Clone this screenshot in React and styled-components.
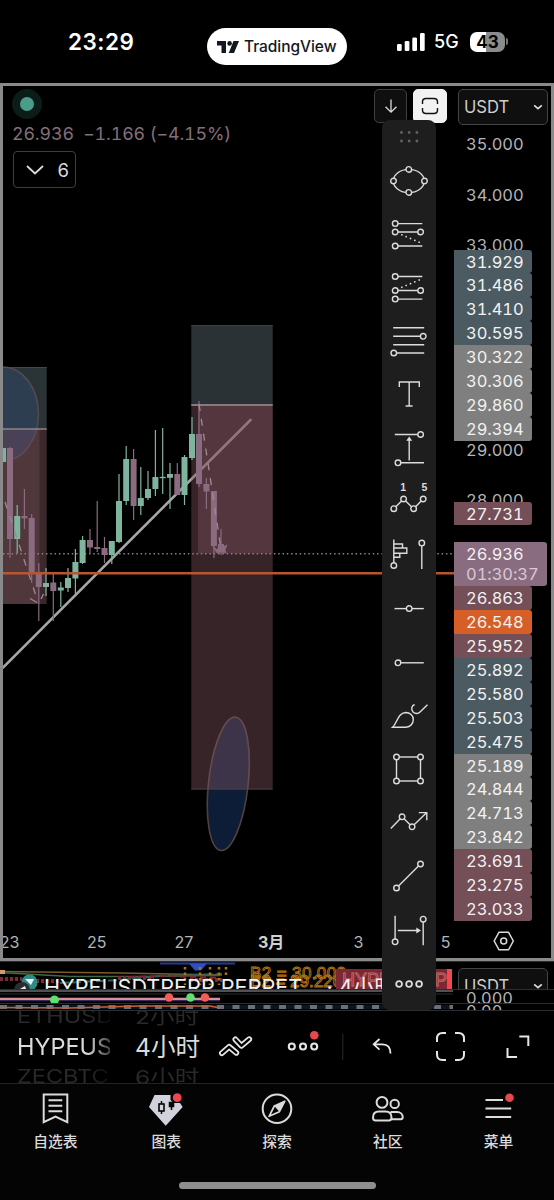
import React from "react";
import styled, { createGlobalStyle } from "styled-components";

const GlobalStyle = createGlobalStyle`
  * {
    box-sizing: border-box;
  }
  body {
    margin: 0;
    background: #000;
    color: #dbdbdb;
    font-family: Inter, "Noto Sans CJK SC", sans-serif;
  }
  svg {
    display: block;
    flex: none;
  }
`;

const Screen = styled.div`
  width: 554px;
  height: 1200px;
  display: flex;
  flex-direction: column;
  background: #000;
  overflow: hidden;
`;

/* status bar */

const StyledStatusBar = styled.header`
  height: 83px;
  flex: none;
  display: grid;
  grid-template-columns: 207px 140px 207px;
  align-items: start;

  .time {
    padding: 28px 0 0 68px;
    font-size: 22.5px;
    font-weight: 600;
    line-height: 27px;
    letter-spacing: 0.5px;
    color: #fff;
  }
  .pill {
    margin-top: 28px;
    height: 37px;
    border-radius: 19px;
    background: #fff;
    color: #131722;
    display: flex;
    align-items: center;
    gap: 5px;
    padding-left: 10px;
    font-size: 15.5px;
    font-weight: 500;
    letter-spacing: -0.05px;
  }
  .signal {
    padding: 31px 0 0 50px;
    display: flex;
    align-items: center;
    color: #fff;
    font-size: 18px;
    font-weight: 500;
    line-height: 20px;
  }
  .signal span {
    margin: 1px 10px 0 9px;
    width: 26px;
    white-space: nowrap;
  }
`;

const Battery = styled.div`
  width: 35px;
  height: 20px;
  border-radius: 7px;
  background: linear-gradient(90deg, #fff 45%, #8b8b8b 45%);
  color: #000;
  font-size: 17px;
  font-weight: 700;
  line-height: 20px;
  text-align: center;
`;

const BatteryTip = styled.div`
  width: 2px;
  height: 7px;
  margin-left: 1px;
  border-radius: 0 3px 3px 0;
  background: #777;
`;

/* chart panel */

const ChartPanel = styled.section`
  position: relative;
  height: 878px;
  flex: none;
  border: 3px solid #8a8a8a;
  display: grid;
  grid-template-columns: 451px 1fr;
  grid-template-rows: 1fr 35px;
`;

const Plot = styled.div`
  display: grid;
  min-width: 0;
  overflow: hidden;

  > * {
    grid-area: 1 / 1;
  }
`;

const Legend = styled.div`
  padding: 3px 0 0 9px;

  .head {
    height: 34px;
    display: flex;
    gap: 6px;
    padding-right: 7px;
  }
  .dot {
    width: 30px;
    height: 30px;
    border-radius: 50%;
    border: 8px solid #0c1d19;
    background: #4a9d89;
    margin-right: auto;
  }
  .quote {
    margin: 0;
    height: 28px;
    line-height: 21px;
    font-size: 17.8px;
    font-variant-numeric: tabular-nums;
    color: #836f7b;
    white-space: pre;
    letter-spacing: -0.1px;
  }
`;

const SquareButton = styled.button`
  width: ${(props) => (props.$active ? "34px" : "33px")};
  height: 34px;
  padding: 0;
  display: flex;
  align-items: center;
  justify-content: center;
  border-radius: 5px;
  border: 1px solid ${(props) => (props.$active ? "#f2f2f2" : "#404040")};
  background: ${(props) => (props.$active ? "#f2f2f2" : "#0f0f0f")};
`;

const CountButton = styled.button`
  width: 63px;
  height: 37px;
  margin-left: 1px;
  padding: 0 6px 0 12px;
  display: flex;
  align-items: center;
  justify-content: space-between;
  border: 1px solid #3d3d3d;
  border-radius: 4px;
  background: #000;
  color: #dbdbdb;
  font: 400 18.5px Inter, sans-serif;
`;

const PriceAxis = styled.div`
  padding: 3px 3px 0 0;
  overflow: hidden;
  font-size: 16.5px;
  font-variant-numeric: tabular-nums;
  letter-spacing: -0.05px;
`;

const CurrencySelect = styled.div`
  width: 90px;
  height: 36px;
  margin: 0 0 10px 4px;
  padding: 0 4px 0 5px;
  display: flex;
  align-items: center;
  justify-content: space-between;
  border: 1px solid #454545;
  border-radius: 5px;
  background: #0f0f0f;
  color: #cfcfcf;
  font-size: 16.6px;
  letter-spacing: 0;
`;

const Tick = styled.div`
  height: ${(props) => props.$height}px;
  padding-left: 12px;
  line-height: 18px;
  color: #b4b4b4;
  overflow: hidden;
`;

const PriceTag = styled.div`
  width: 77.5px;
  height: 23.95px;
  padding-left: 12px;
  line-height: 24px;
  color: #f2f2f2;
  border-radius: 0 3px 3px 0;
  background: ${(props) => props.$color};
  margin-bottom: ${(props) => props.$gap || 0}px;
`;

const CurrentPrice = styled.div`
  width: 93px;
  height: 44px;
  padding: 2px 0 0 12px;
  line-height: 20px;
  color: #f5f0f4;
  border-radius: 0 3px 3px 0;
  background: #8a6c80;

  span {
    display: block;
    color: #d9c8d3;
  }
`;

const TimeAxis = styled.div`
  display: flex;
  overflow: hidden;

  span {
    flex: none;
    width: 87.2px;
    text-align: center;
    font-size: 16px;
    line-height: 38px;
    color: #b4b4b4;
  }
  span:first-child {
    margin-left: -37px;
  }
  .month {
    font-weight: 700;
    color: #d0d0d0;
  }
`;

const AxisSettings = styled.div`
  padding: 8px 0 0 39px;
`;

const DrawingBar = styled.div`
  position: absolute;
  z-index: 2;
  left: 379px;
  top: 34px;
  width: 53.6px;
  height: 890px;
  border-radius: 8px;
  background: #1e1e1e;
  display: flex;
  flex-direction: column;
`;

const ToolIcon = styled.svg`
  width: 53.6px;
  height: 53.53px;
  fill: none;
  stroke: #dcdcdc;
  stroke-width: 1.4;

  circle {
    fill: #1e1e1e;
  }
  text {
    fill: #dcdcdc;
    stroke: none;
    font: 700 10.5px "Liberation Sans", sans-serif;
  }
  .solid {
    fill: #dcdcdc;
    stroke: none;
  }
`;

/* squeezed lower panes */

const LowerPanes = styled.section`
  height: 50px;
  flex: none;
  display: flex;
  flex-direction: column;
  background: #000;
`;

const Pane = styled.div`
  height: ${(props) => props.$height}px;
  border-top: 1px solid #2b2d31;
  display: grid;
  grid-template-columns: 453px 1fr;
  overflow: hidden;

  > svg {
    grid-area: 1 / 1;
  }
`;

const PaneTitle = styled.div`
  grid-area: 1 / 1;
  height: 27px;
  padding: 14px 0 0 44px;
  font-size: 21.6px;
  line-height: 22px;
  white-space: pre;
  color: #f0f0f0;
  overflow: hidden;
`;

const PaneScale = styled.div`
  grid-area: 1 / 2;
  padding-left: 13px;
  font-size: 16.4px;
  font-variant-numeric: tabular-nums;
  line-height: ${(props) => props.$line}px;
  color: #b4b4b4;
  overflow: hidden;
`;

const PaneSelect = styled.div`
  grid-area: 1 / 2;
  padding-top: 6px;
  padding-left: 1px;
  overflow: hidden;
`;

/* bottom toolbar */

const BottomToolbar = styled.div`
  height: 73px;
  flex: none;
  border-bottom: 1px solid #242424;
  display: flex;
  align-items: center;
`;

const Picker = styled.div`
  width: ${(props) => props.$width}px;
  height: 72px;
  margin-left: ${(props) => props.$left}px;
  display: flex;
  flex-direction: column;
  justify-content: center;
  font-size: ${(props) => props.$size}px;
  line-height: 30px;
  white-space: nowrap;
  overflow: hidden;
  color: #dbdbdb;
  mask-image: ${(props) =>
    props.$fade ? "linear-gradient(90deg, #000 76%, transparent 110%)" : "none"};

  > * {
    flex: none;
    height: 30px;
  }
`;

const GhostOption = styled.div`
  color: #292929;
  transform: scaleY(0.78);
`;

const ToolbarIcons = styled.div`
  display: flex;
  align-items: center;
  fill: none;
  stroke: #e6e6e6;
  stroke-width: 2;
`;

const TabBar = styled.nav`
  height: 117px;
  flex: none;
  background: #040404;
  display: flex;
  flex-direction: column;
  align-items: center;

  .tabs {
    display: flex;
    width: 100%;
    height: 98px;
  }
`;

const Tab = styled.div`
  flex: 1;
  display: flex;
  flex-direction: column;
  align-items: center;
  padding-top: 5px;
  font-size: 14.8px;
  font-weight: 500;
  line-height: 22px;
  color: #dbdbdb;
  gap: 3px;

  svg {
    fill: none;
    stroke: #dbdbdb;
    stroke-width: 2;
  }
`;

const HomeIndicator = styled.div`
  width: 197px;
  height: 7px;
  border-radius: 4px;
  background: #8e8e8e;
`;

const BLUE = "#4c5a62";
const GREY = "#7f7f7f";
const WINE = "#744f57";
const ORANGE = "#d65f28";

const upperTags = [
  ["31.929", BLUE],
  ["31.486", BLUE],
  ["31.410", BLUE],
  ["30.595", BLUE],
  ["30.322", GREY],
  ["30.306", GREY],
  ["29.860", GREY],
  ["29.394", GREY],
];

const lowerTags = [
  ["26.863", WINE],
  ["26.548", ORANGE],
  ["25.952", WINE],
  ["25.892", BLUE],
  ["25.580", BLUE],
  ["25.503", BLUE],
  ["25.475", BLUE],
  ["25.189", GREY],
  ["24.844", GREY],
  ["24.713", GREY],
  ["23.842", GREY],
  ["23.691", WINE],
  ["23.275", WINE],
  ["23.033", WINE],
];

// x, high, low, body top, body bottom, rising
const candles = [
  [3, 448, 462, 448, 462, 1],
  [10, 447, 558, 448, 539, 0],
  [17.2, 505, 553, 516, 539, 1],
  [24.4, 489, 529, 516, 518.3, 0],
  [31.7, 514, 583, 518, 572, 0],
  [38.8, 563, 621, 572, 587, 0],
  [46, 568, 596, 583, 587, 1],
  [53.3, 574, 621, 582.5, 591, 0],
  [60.8, 582, 607, 587.5, 590.5, 1],
  [68, 568, 592, 578, 588, 1],
  [75.4, 549, 594, 562, 578.5, 1],
  [82.6, 536, 564, 540, 563, 1],
  [90, 529, 553, 540, 547.5, 0],
  [97.2, 501, 552, 547, 549, 0],
  [104.5, 537, 563, 548, 555, 0],
  [111.8, 541, 564, 541, 555, 1],
  [119, 474, 543, 501, 542, 1],
  [126.2, 446, 505, 459, 501, 1],
  [133.6, 449, 520, 459, 506, 0],
  [140.8, 467, 515, 498, 506, 1],
  [148, 471, 500, 489, 498, 1],
  [155.4, 430, 496, 477, 489, 1],
  [162.7, 428, 494, 476.8, 478.2, 1],
  [170, 463, 509, 474, 477.8, 1],
  [177.3, 463, 495, 474, 495, 0],
  [184.5, 455, 505, 457, 495, 1],
  [192, 417, 460, 434, 458, 1],
  [199, 401, 487, 434, 484, 0],
  [206.4, 478, 509, 484, 491.5, 0],
  [213.9, 491, 558, 491, 546, 0],
  [221, 529, 555, 544, 552, 0],
];

function Candle(props) {
  const [x, high, low, top, bottom, up] = props.data;
  return (
    <g fill={up ? "#7fb59f" : "#8a6b80"}>
      <rect x={x - 0.6} y={high} width="1.2" height={low - high} />
      <rect x={x - 3} y={top} width="6" height={bottom - top} />
    </g>
  );
}

function PriceChart() {
  return (
    <svg width="451" height="837" viewBox="3 86 451 837" fill="none">
      <path d="M3 667.5L250.5 420" stroke="#a6a6a6" strokeWidth="2.6" strokeLinecap="round" />
      <ellipse
        cx="228.3"
        cy="783.8"
        rx="19.8"
        ry="67"
        transform="rotate(6.3 228.3 783.8)"
        fill="#0d1c37"
        stroke="#52403f"
        strokeWidth="1.6"
      />

      <rect x="191.3" y="325" width="81.4" height="80" fill="#2b3236" />
      <path d="M191.3 325.5h81.4" stroke="#3b4347" />
      <rect x="191.3" y="405" width="81.4" height="384.5" fill="#875a64" fillOpacity="0.4" />
      <rect x="198" y="405" width="74.7" height="148.5" fill="#875a64" fillOpacity="0.37" />
      <path d="M191.3 789h81.4" stroke="#4f3c42" />
      <path d="M191.3 405h81.4" stroke="#87797d" strokeWidth="1.8" />

      <rect x="3" y="367" width="43.7" height="62" fill="#2a3336" />
      <path d="M3 367.5h43.7" stroke="#3f484b" />
      <rect x="3" y="429" width="43.7" height="175" fill="#3a282d" />
      <rect x="3" y="429" width="36.5" height="175" fill="#50373c" />
      <ellipse
        cx="3"
        cy="414"
        rx="35.5"
        ry="47"
        fill="#3560a0"
        fillOpacity="0.25"
        stroke="#6a4f58"
        strokeOpacity="0.7"
        strokeWidth="1.6"
      />
      <path d="M3 429h43.7" stroke="#8f8588" strokeWidth="1.6" />

      <path d="M3 553.7h451" stroke="#8d8187" strokeWidth="1.4" strokeDasharray="1.5 2.8" />
      {candles.map((candle, i) => {
        return <Candle key={i} data={candle} />;
      })}
      <path d="M5 502L38 602" stroke="#9b868e" strokeWidth="1.4" strokeDasharray="7 8" />
      <path d="M30 598.5l7 4M41 599l2.5-5" stroke="#9b868e" strokeWidth="1.4" />
      <path d="M199 404L221 549" stroke="#a18c94" strokeWidth="1.3" strokeDasharray="7 8" />
      <path
        d="M213 546l4 4 3-6 3 3 4-2-2 5 1 3-5-1-4 1-2-3z"
        fill="#8a6b80"
        stroke="#8a6b80"
        strokeWidth="0.8"
      />
      <path d="M3 573.3h451" stroke="#b85630" strokeWidth="2.6" />
    </svg>
  );
}

const dots = { strokeDasharray: "0.1 4.6", strokeLinecap: "round", strokeWidth: 1.7 };

// every tool is drawn around its own centre
const tools = [
  <>
    <ellipse rx="15.5" ry="11.6" />
    <circle cx="-15.3" r="2.8" />
    <circle cx="15.7" r="2.8" />
    <circle cy="-11.6" r="2.8" />
    <circle cy="11.4" r="2.8" />
  </>,
  <>
    <path d="M-14-11.4h27.5M-14-3h25M-14 11h27.5" />
    <path d="M-7-.2L13 8.3" {...dots} />
    <circle cx="-13.6" cy="-11.4" r="2.8" />
    <circle cx="-13.6" cy="-3" r="2.8" />
    <circle cx="11.8" cy="-3" r="2.8" />
    <circle cx="-13.6" cy="11" r="2.8" />
  </>,
  <>
    <path d="M-14-11.5h27.5M-14 2.5h25M-14 11.1h27.5" />
    <path d="M-7-.7L12-8.7" {...dots} />
    <circle cx="-13.6" cy="-11.5" r="2.8" />
    <circle cx="-13.6" cy="2.5" r="2.8" />
    <circle cx="11.8" cy="2.5" r="2.8" />
    <circle cx="-13.6" cy="11.1" r="2.8" />
  </>,
  <>
    <path d="M-15.6-14.3h31M-15.6-5.7h28M-15.6 2.7h31M-12 11h27.4" />
    <circle cx="14.4" cy="-5.7" r="2.8" />
    <circle cx="-15" cy="11" r="2.8" />
  </>,
  <path d="M-9.5-8v-5H10.5v5M.4-13v24M-3.2 11H3.8" />,
  <>
    <path d="M-14-14.5h25M-11 13.8h26.2M.4 11.5V-9" />
    <path className="solid" d="M-2.6-8.2L.4-12.6l3 4.4z" />
    <circle cx="11.8" cy="-14.5" r="2.8" />
    <circle cx="-10.8" cy="13.8" r="2.8" />
  </>,
  <>
    <path d="M-15 6.7l9.8-9.7 10 9.7L14.4-3" />
    <circle cx="-15" cy="6.7" r="2.8" />
    <circle cx="-5.2" cy="-3" r="2.8" />
    <circle cx="4.8" cy="6.7" r="2.8" />
    <circle cx="14.4" cy="-3" r="2.8" />
    <text x="-8.6" y="-10.8">1</text>
    <text x="12.6" y="-10.8">5</text>
  </>,
  <>
    <path d="M-15-16.5V9M-15-12h8.7v4h4.3v5.3H-15M-6.3-8H-15M-9-2.7V1.2h-6M13 13V-10" />
    <circle cx="-15" cy="9.5" r="2.8" />
    <circle cx="13" cy="-12.9" r="2.8" />
  </>,
  <>
    <path d="M-14.3-.4h29.3" />
    <circle cx=".4" cy="-.4" r="2.8" />
  </>,
  <>
    <path d="M-10-.2h25" />
    <circle cx="-10.8" cy="-.2" r="2.8" />
  </>,
  <path d="M-16.2 11.2c4.4-3.6 5-14.2 13-14.7 4.5 0 7.7 3.2 7.7 7.2 0 4.5-3.5 7.5-8 7.5zM5.8-11.5c-3.4 1.4-3.4 4.7-1.8 7.2 2.5 2.5 5.5 2.2 7.2.4l7.5-7.4" />,
  <>
    <rect x="-12.3" y="-13" width="24" height="24" />
    <circle cx="-12.3" cy="-13" r="2.8" />
    <circle cx="11.7" cy="-13" r="2.8" />
    <circle cx="-12.3" cy="11" r="2.8" />
    <circle cx="11.7" cy="11" r="2.8" />
  </>,
  <>
    <path d="M-18 5.5L-6.7-6.2 3.3 3.8 17.7-10.2M10-10.4h8v7.6" />
    <circle cx="-6.7" cy="-6.2" r="2.8" />
    <circle cx="3.3" cy="3.8" r="2.8" />
  </>,
  <>
    <path d="M-12.3 11l24-24" />
    <circle cx="-12.3" cy="11" r="2.8" />
    <circle cx="11.7" cy="-13" r="2.8" />
  </>,
  <>
    <path d="M-13.7-15.2v24M14.4-10v24.2M-11-.5h20" />
    <path className="solid" d="M7.5-3.5L12.2-.5l-4.7 3z" />
    <circle cx="-13.7" cy="10.8" r="2.8" />
    <circle cx="14.4" cy="-11.8" r="2.8" />
  </>,
  <g strokeWidth="1.8">
    <circle cx="-9.7" r="2.9" />
    <circle cx=".3" r="2.9" />
    <circle cx="10.3" r="2.9" />
  </g>,
];

function DrawingTools() {
  return (
    <DrawingBar>
      <svg width="53.6" height="34.3" viewBox="0 0 53.6 34.3" fill="#616161">
        {[19.5, 27.2, 34.9].map((x) => {
          return (
            <React.Fragment key={x}>
              <circle cx={x} cy="12.5" r="1.4" />
              <circle cx={x} cy="21" r="1.4" />
            </React.Fragment>
          );
        })}
      </svg>
      {tools.map((tool, i) => {
        return (
          <ToolIcon key={i} viewBox="-26.8 -27 53.6 53.53">
            {tool}
          </ToolIcon>
        );
      })}
    </DrawingBar>
  );
}

function StatusBar() {
  return (
    <StyledStatusBar>
      <div className="time">23:29</div>
      <div className="pill">
        <svg width="22" height="12" viewBox="0 0 22 12" fill="#131722">
          <path d="M0 0h9v12H4.5V4.5H0zM16.5 0H22l-5 12h-5.2z" />
          <circle cx="12.6" cy="2.4" r="2.3" />
        </svg>
        TradingView
      </div>
      <div className="signal">
        <svg width="28" height="18" viewBox="0 0 28 18" fill="#fff">
          <rect x="0" y="11" width="4.7" height="7" rx="1.3" />
          <rect x="7.7" y="8" width="4.7" height="10" rx="1.3" />
          <rect x="15.3" y="4.5" width="4.7" height="13.5" rx="1.3" />
          <rect x="23" y="0" width="4.7" height="18" rx="1.3" />
        </svg>
        <span>5G</span>
        <Battery>43</Battery>
        <BatteryTip />
      </div>
    </StyledStatusBar>
  );
}

function SelectChevron() {
  return (
    <svg width="10" height="8" viewBox="0 0 10 8" fill="none" stroke="#dbdbdb" strokeWidth="1.7">
      <path d="M1.2 2.3L5 5.6l3.8-3.3" />
    </svg>
  );
}

function LowerArea() {
  return (
    <LowerPanes>
      <Pane $height={28}>
        <svg width="453" height="27" viewBox="0 962 453 27" fill="none">
          <path d="M0 971.5L120 973l102 2" stroke="#7c5a2c" strokeWidth="1.6" />
          <path d="M0 972.5l70 4h70l80-1" stroke="#3c6a48" strokeWidth="1.6" />
          <path
            d="M0 979h22M36 981h24M118 978h36M190 980h32"
            stroke="#7d2836"
            strokeWidth="4"
            strokeDasharray="3 2"
          />
          <path d="M60 983l60-3 40-4 62-2" stroke="#2c5f5a" strokeWidth="2" strokeDasharray="9 3" />
          <path d="M130 977l40-1 50 2" stroke="#7d2836" strokeWidth="2" strokeDasharray="6 4" />
          <rect x="0" y="970" width="5" height="4" fill="#cf9c6c" />
          <path d="M160 963.5h75" stroke="#25398f" strokeWidth="2" />
          <path d="M189 963.5h18l-6 7h-6z" fill="#2f4fc0" />
          <path
            d="M185 967v18M200 967v18M210 967v18M219 967v18M226 967v9"
            stroke="#b07418"
            strokeWidth="2.5"
            strokeDasharray="2.5 3"
          />
          <g stroke="#b87716" strokeWidth="0.9" fontFamily="Liberation Sans" fontSize="17">
            <text x="250" y="979" textLength="96">
              B2 = 30.000
            </text>
            <text x="250" y="987" textLength="92">
              B2 = 29.226
            </text>
          </g>
          <rect x="336" y="969" width="111" height="20" fill="#7b2833" />
          <rect x="447" y="969" width="5" height="20" fill="#f0484f" />
          <g stroke="#c46a72" strokeWidth="0.9" fontFamily="Liberation Sans" fontSize="18">
            <text x="342" y="986">HYPE</text>
            <text x="435" y="986">P</text>
          </g>
          <circle cx="29.5" cy="982.5" r="8" fill="#2f8b86" />
          <path d="M25 979h9l-3 6z" fill="#e9f4f4" />
          <circle cx="22" cy="990" r="8" fill="#2a2e33" />
          <path d="M20 989l5-3 1 3z" fill="#eee" />
        </svg>
        <PaneTitle>HYPEUSDTPERP PERPET    · 4小时</PaneTitle>
        <PaneSelect>
          <CurrencySelect>
            USDT
            <SelectChevron />
          </CurrencySelect>
        </PaneSelect>
      </Pane>
      <Pane $height={14}>
        <svg width="453" height="13" viewBox="0 990 453 13" fill="none">
          <path d="M0 991h453" stroke="#6c6c70" strokeWidth="1.5" />
          <path d="M0 994h453" stroke="#2b2d31" />
          <path d="M0 1000.5h220" stroke="#3a2a5c" strokeWidth="1.5" />
          <path d="M0 998.8h220" stroke="#d8909a" strokeWidth="2.2" />
          <circle cx="54.5" cy="1000" r="4.5" fill="#5fe072" />
          <circle cx="169" cy="997.5" r="4.3" fill="#f35c57" />
          <circle cx="190.5" cy="997.5" r="4.3" fill="#5fe072" />
          <circle cx="205" cy="997.5" r="4.3" fill="#f35c57" />
        </svg>
        <PaneScale $line={17}>0.000</PaneScale>
      </Pane>
      <Pane $height={7}>
        <svg width="453" height="6" viewBox="0 1004 453 6" fill="none">
          <path d="M0 1007h453" stroke="#0c1522" strokeWidth="4" />
          <path d="M0 1007h453" stroke="#6b7078" strokeWidth="4" strokeDasharray="7 8.5" />
          <path d="M0 1007.5l70 .5 70-2h70l10 2" stroke="#c2623a" strokeWidth="1.5" />
        </svg>
        <PaneScale $line={14}>0.00</PaneScale>
      </Pane>
      <Pane $height={1} />
    </LowerPanes>
  );
}

// a wide line with a dark core gives the hollow double chevron
const chevrons = "M221.9 1053.2l7.2-6.4 7.2 6M235.4 1039.4l6 6.4 7.800-6.600";

function Toolbar() {
  return (
    <BottomToolbar>
      <Picker $left={17} $width={93} $size={23.5} $fade>
        <GhostOption>ETHUSD</GhostOption>
        <div>HYPEUS</div>
        <GhostOption>ZECBTC</GhostOption>
      </Picker>
      <Picker $left={25} $width={71} $size={24.6}>
        <GhostOption>2小时</GhostOption>
        <div>4小时</div>
        <GhostOption>6小时</GhostOption>
      </Picker>
      <ToolbarIcons>
        <svg width="348" height="72" viewBox="206 1011 348 72">
          <g strokeLinecap="round" strokeLinejoin="round">
            <path d={chevrons} strokeWidth="5.8" />
            <path d={chevrons} stroke="#000" strokeWidth="2.3" />
          </g>
          <g strokeWidth="2.1">
            <circle cx="291.8" cy="1046.5" r="3" />
            <circle cx="303" cy="1046.5" r="3" />
            <circle cx="314.2" cy="1046.5" r="3" />
          </g>
          <circle cx="314.3" cy="1035.2" r="4.3" fill="#e5484f" stroke="none" />
          <path d="M342.8 1034v26" stroke="#2a2a2a" strokeWidth="1" />
          <path strokeWidth="1.8" d="M379.5 1039l-5.8 5.3 5.8 5.3M374 1044.3h8.5c5 0 8 3 8 9.2" />
          <path d="M437 1042v-3.5c0-3.5 2-5.5 5.5-5.5h3.5M455 1033h3.5c3.5 0 5.5 2 5.5 5.5v3.5M464 1051v3.5c0 3.5-2 5.5-5.5 5.5H455M446 1060h-3.5c-3.5 0-5.5-2-5.5-5.5V1051" />
          <path d="M519.3 1036.5h9v9.500M507.500 1048v9h9.500" />
        </svg>
      </ToolbarIcons>
    </BottomToolbar>
  );
}

function Navigation() {
  return (
    <TabBar>
      <div className="tabs">
        <Tab>
          <svg width="40" height="39" viewBox="35.5 1089 40 39">
            <path d="M44.2 1094.5h23.6v27.7l-11.8-5.7-11.8 5.7zM49 1100.3h13.8M49 1105.8h13.8M49 1111.3h13.8" />
          </svg>
          自选表
        </Tab>
        <Tab>
          <svg width="40" height="39" viewBox="146 1089 40 39">
            <path
              stroke="none"
              fill="#d1d3dc"
              d="M154.5 1095h16v5l3 3h6.5l2.7 4-17 18.8-16.7-18.8z"
            />
            <path d="M161.5 1101v13" stroke="#040404" strokeWidth="1.5" />
            <rect
              x="159"
              y="1104"
              width="5"
              height="7"
              fill="#d1d3dc"
              stroke="#040404"
              strokeWidth="1.6"
            />
            <path
              d="M169.5 1102.500h4v4h-4zM171.500 1106v4"
              stroke="#040404"
              strokeWidth="1.5"
              fill="#040404"
            />
            <circle cx="177.2" cy="1097.7" r="4.4" fill="#ee4750" stroke="none" />
          </svg>
          图表
        </Tab>
        <Tab>
          <svg width="40" height="39" viewBox="256.5 1089 40 39">
            <circle cx="276.5" cy="1108.7" r="14.3" />
            <path
              strokeWidth="1.7"
              strokeLinejoin="round"
              d="M284.3 1101.2l-10.5 4.8-5.2 10.3 10.3-4.6z"
            />
            <path fill="#dbdbdb" stroke="none" d="M284.3 1101.2l-10.5 4.8 5.1 5.7z" />
          </svg>
          探索
        </Tab>
        <Tab>
          <svg width="40" height="39" viewBox="368 1089 40 39">
            <circle cx="382" cy="1102.4" r="5.4" />
            <circle cx="394.7" cy="1103.9" r="4.2" />
            <path d="M373 1117.5c0-4 2.5-6 6-6h6.5c3.5 0 6 2 6 6 0 2-.5 3-2.5 3h-13.5c-2 0-2.5-1-2.5-3zM390.5 1112h6.5c3.3 0 5.7 2 5.7 5.2 0 1.3-.6 2-2 2H391.5" />
          </svg>
          社区
        </Tab>
        <Tab>
          <svg width="40" height="39" viewBox="478.5 1089 40 39">
            <path d="M485 1100h17.5M485 1108.4h25.7M485 1117h25.7" />
            <circle cx="509" cy="1097.7" r="4.3" fill="#e5484f" stroke="none" />
          </svg>
          菜单
        </Tab>
      </div>
      <HomeIndicator />
    </TabBar>
  );
}

function App() {
  return (
    <Screen>
      <GlobalStyle />
      <StatusBar />
      <ChartPanel>
        <Plot>
          <PriceChart />
          <Legend>
            <div className="head">
              <div className="dot" />
              <SquareButton>
                <svg width="16" height="16" viewBox="0 0 16 16" fill="none" stroke="#dbdbdb" strokeWidth="1.3">
                  <path d="M8 1.5V14M2.5 8.8L8 14.2l5.5-5.4" />
                </svg>
              </SquareButton>
              <SquareButton $active>
                <svg width="18" height="18" viewBox="0 0 18 18" fill="none" stroke="#111" strokeWidth="1.4">
                  <path d="M1.5 7V5c0-2 1.5-3.5 3.5-3.5h8c2 0 3.5 1.5 3.5 3.5v2M1.5 11v2c0 2 1.5 3.5 3.5 3.5h8c2 0 3.5-1.5 3.5-3.5v-2" />
                </svg>
              </SquareButton>
            </div>
            <p className="quote">26.936  −1.166 (−4.15%)</p>
            <CountButton>
              <svg width="18" height="12" viewBox="0 0 18 12" fill="none" stroke="#dbdbdb" strokeWidth="1.8">
                <path d="M1 2l8 7.5L17 2" />
              </svg>
              6
            </CountButton>
          </Legend>
        </Plot>
        <PriceAxis>
          <CurrencySelect>
            USDT
            <SelectChevron />
          </CurrencySelect>
          <Tick $height={50.5}>35.000</Tick>
          <Tick $height={50.5}>34.000</Tick>
          <Tick $height={13.5}>33.000</Tick>
          {upperTags.map(([price, color]) => {
            return (
              <PriceTag key={price} $color={color}>
                {price}
              </PriceTag>
            );
          })}
          <Tick $height={50}>29.000</Tick>
          <Tick $height={10.5}>28.000</Tick>
          <PriceTag $color={WINE} $gap={16.5}>
            27.731
          </PriceTag>
          <CurrentPrice>
            26.936
            <span>01:30:37</span>
          </CurrentPrice>
          {lowerTags.map(([price, color]) => {
            return (
              <PriceTag key={price} $color={color}>
                {price}
              </PriceTag>
            );
          })}
        </PriceAxis>
        <TimeAxis>
          <span>23</span>
          <span>25</span>
          <span>27</span>
          <span className="month">3月</span>
          <span>3</span>
          <span>5</span>
        </TimeAxis>
        <AxisSettings>
          <svg width="22" height="20" viewBox="0 0 22 20" fill="none" stroke="#dbdbdb" strokeWidth="1.5">
            <path d="M6 1.2h9.5L20.3 10l-4.8 8.8H6L1.2 10z" />
            <circle cx="10.7" cy="10" r="3" />
          </svg>
        </AxisSettings>
        <DrawingTools />
      </ChartPanel>
      <LowerArea />
      <Toolbar />
      <Navigation />
    </Screen>
  );
}

export default App;
